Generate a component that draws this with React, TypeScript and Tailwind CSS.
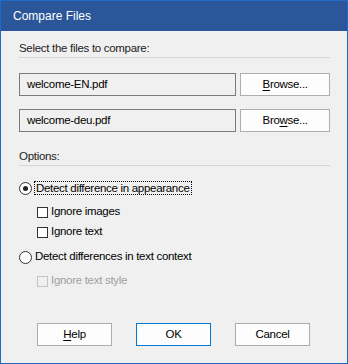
import React from 'react';

const font = { fontFamily: '"Liberation Sans", Arial, sans-serif' };

const Radio: React.FC<{ checked?: boolean }> = ({ checked }) => (
  <span className="w-[13px] h-[13px] rounded-full border border-[#333] bg-white flex items-center justify-center shrink-0">
    {checked && <span className="w-[5px] h-[5px] rounded-full bg-[#222]" />}
  </span>
);

const Check: React.FC<{ disabled?: boolean }> = ({ disabled }) => (
  <span
    className={`w-[11px] h-[11px] border shrink-0 ${
      disabled ? 'border-[#c4c4c4] bg-[#f0f0f0]' : 'border-[#333] bg-white'
    }`}
  />
);

const Button: React.FC<{ children: React.ReactNode; primary?: boolean; className?: string }> = ({
  children,
  primary,
  className = '',
}) => (
  <button
    className={`h-[23px] bg-[#fdfdfd] border text-black flex items-center justify-center ${
      primary ? 'border-[#0078d7]' : 'border-[#adadad]'
    } ${className}`}
  >
    {children}
  </button>
);

export default function App() {
  return (
    <div
      className="w-[348px] h-[364px] border border-[#1e6bc6] bg-[#f0f0f0] flex flex-col text-[11.5px] tracking-[-0.3px] text-black"
      style={font}
    >
      {/* Title bar */}
      <div className="h-[30px] bg-[#2b579a] flex items-center pl-3 text-white text-[12px] tracking-normal shrink-0">
        Compare Files
      </div>

      <div className="flex flex-col pl-[18px] pr-[17px]">
        <div className="mt-[9px] h-[16px] leading-[16px] text-[#222]">Select the files to compare:</div>
        <div className="h-px bg-[#d6d6d6] mt-px" />

        <div className="flex gap-[4px] mt-[15px]">
          <div className="w-[218px] h-[23px] border border-[#7a7a7a] bg-[#f0f0f0] flex items-center pl-[7px]">
            welcome-EN.pdf
          </div>
          <Button className="w-[90px]">
            <span className="underline underline-offset-2">B</span>rowse...
          </Button>
        </div>
        <div className="flex gap-[4px] mt-[13px]">
          <div className="w-[218px] h-[23px] border border-[#7a7a7a] bg-[#f0f0f0] flex items-center pl-[7px]">
            welcome-deu.pdf
          </div>
          <Button className="w-[90px]">
            Bro<span className="underline underline-offset-2">w</span>se...
          </Button>
        </div>

        <div className="mt-[16px] h-[16px] leading-[16px] text-[#222]">Options:</div>
        <div className="h-px bg-[#d6d6d6] mt-px" />

        <div className="flex items-center gap-[2px] mt-[14px] h-[16px]">
          <Radio checked />
          <span className="border border-dotted border-black leading-[12px] px-px">
            Detect difference in appearance
          </span>
        </div>
        <div className="flex items-center gap-[3px] mt-[8px] ml-[18px] h-[16px]">
          <Check />
          <span>Ignore images</span>
        </div>
        <div className="flex items-center gap-[3px] mt-[4px] ml-[18px] h-[16px]">
          <Check />
          <span>Ignore text</span>
        </div>
        <div className="flex items-center gap-[3px] mt-[9px] h-[16px]">
          <Radio />
          <span>Detect differences in text context</span>
        </div>
        <div className="flex items-center gap-[3px] mt-[8px] ml-[18px] h-[16px]">
          <Check disabled />
          <span className="text-[#a0a0a0]">Ignore text style</span>
        </div>

        <div className="flex mt-[34px] pl-[18px] gap-[24px]">
          <Button className="w-[75px]">
            <span className="underline underline-offset-2">H</span>elp
          </Button>
          <Button primary className="w-[75px]">
            OK
          </Button>
          <Button className="w-[75px]">Cancel</Button>
        </div>
      </div>
    </div>
  );
}
